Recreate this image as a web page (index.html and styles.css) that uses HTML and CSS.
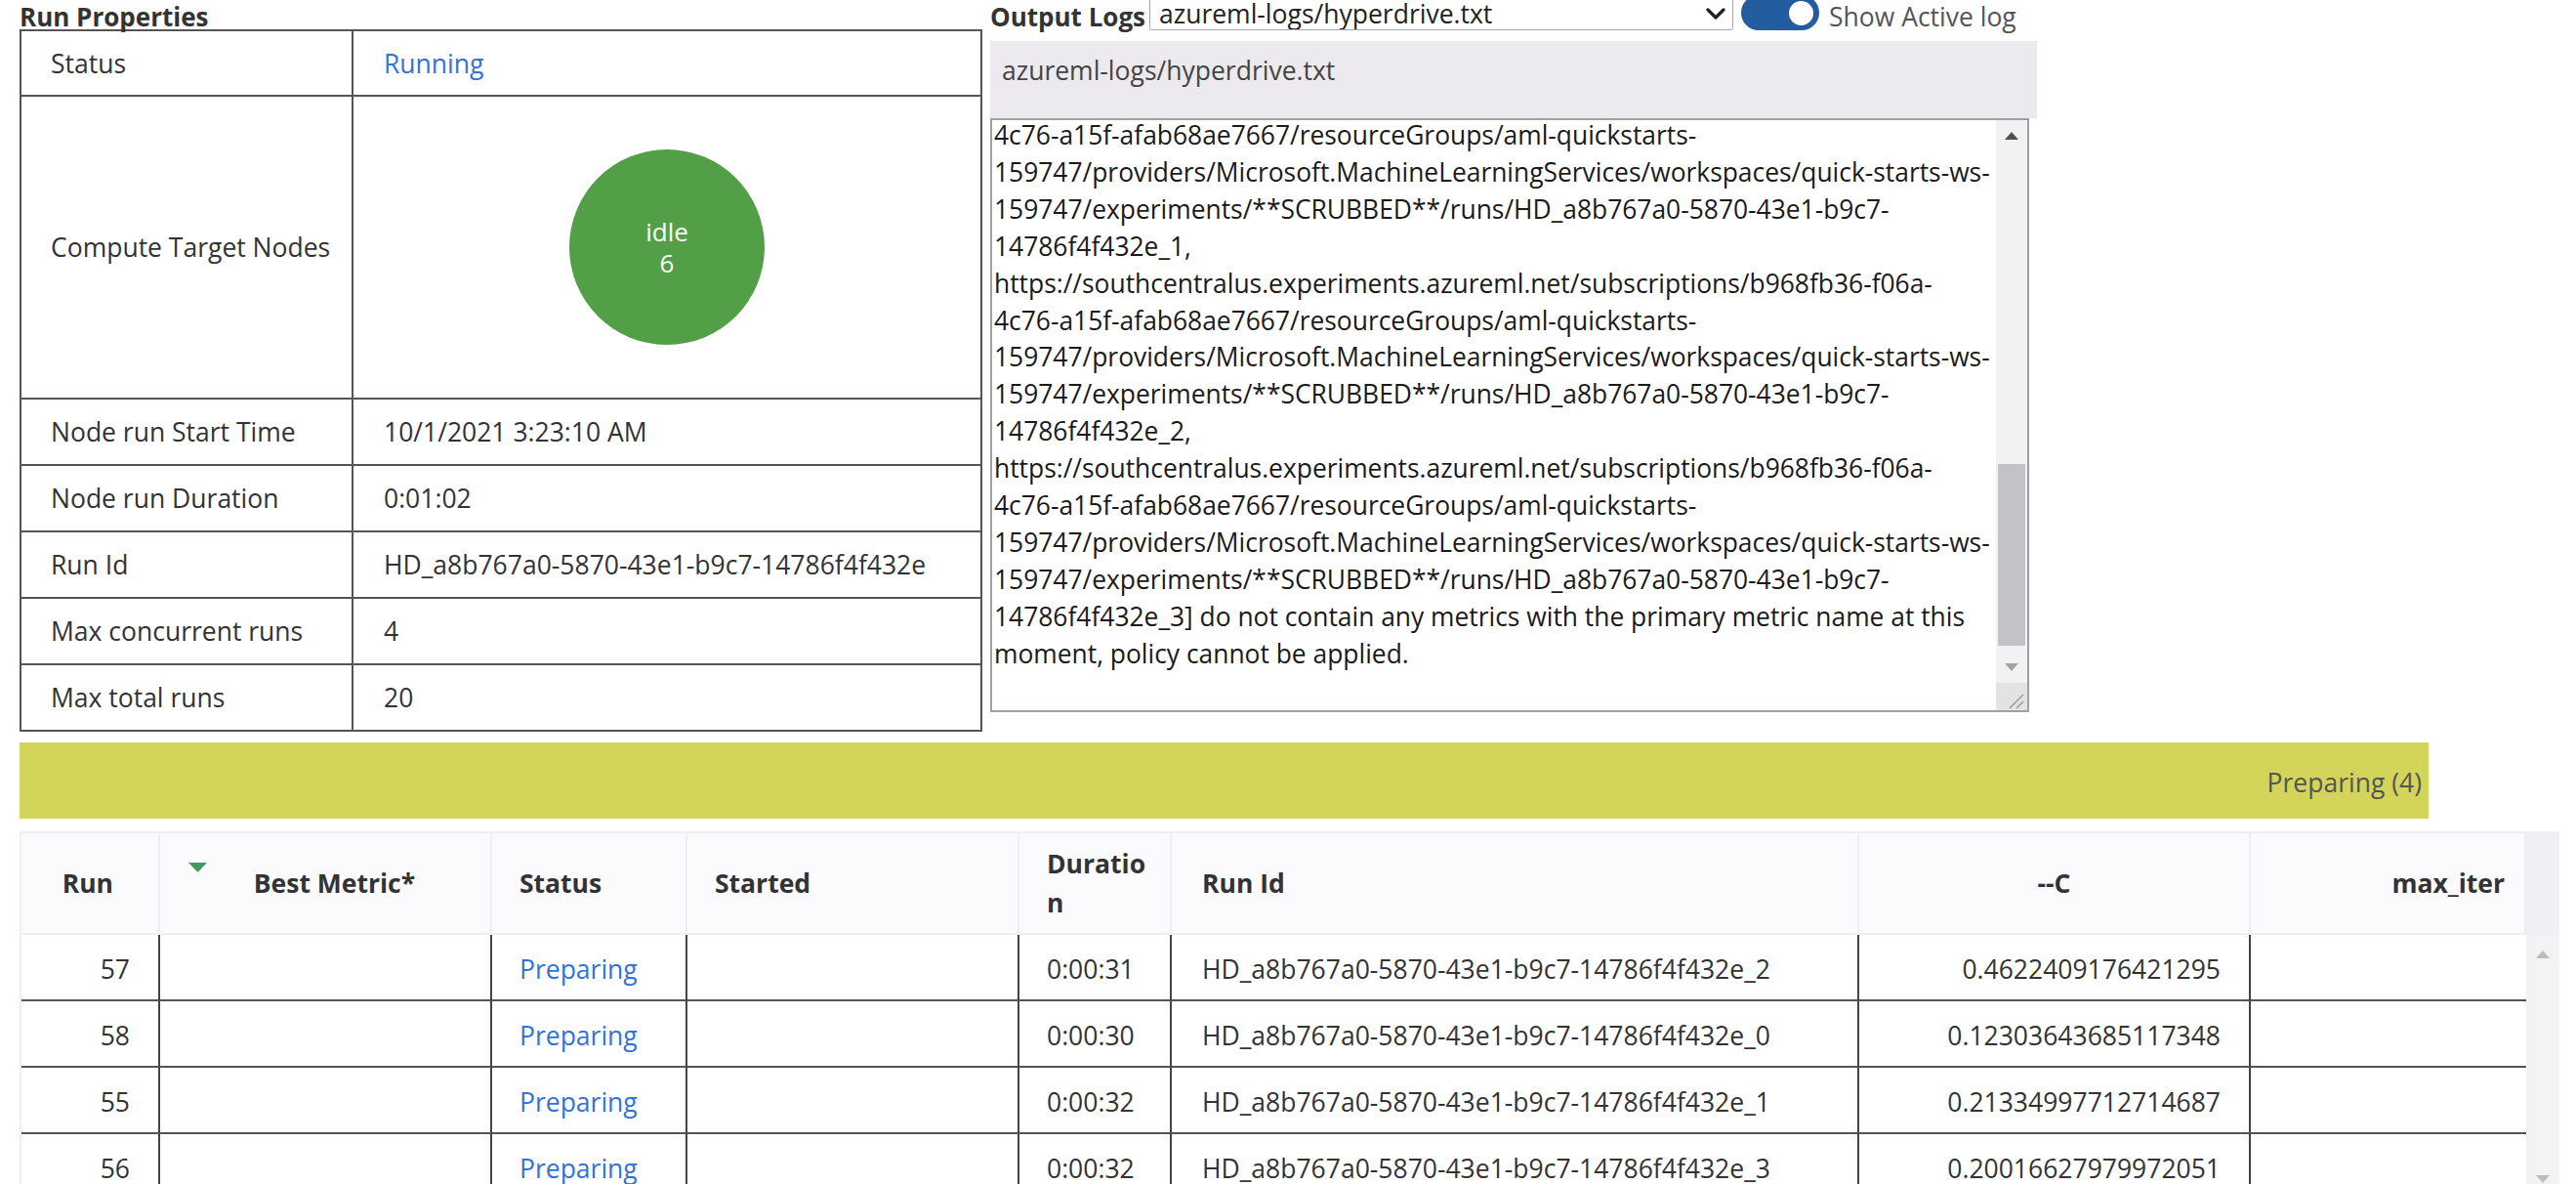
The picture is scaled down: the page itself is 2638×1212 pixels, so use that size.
FILE: index.html
```html
<!DOCTYPE html>
<html lang="en">
<head>
<meta charset="utf-8">
<title>Run Details</title>
<link rel="stylesheet" href="styles.css">
</head>
<body>
<div class="page">
  <div class="top">
    <section class="props">
      <h2 class="title">Run Properties</h2>
      <div class="ptable">
        <div class="pk r-s">Status</div>
        <div class="pv r-s"><a class="link">Running</a></div>
        <div class="pk r-c">Compute Target Nodes</div>
        <div class="pv r-c center"><div class="node"><span>idle</span><span>6</span></div></div>
        <div class="pk">Node run Start Time</div>
        <div class="pv">10/1/2021 3:23:10 AM</div>
        <div class="pk">Node run Duration</div>
        <div class="pv">0:01:02</div>
        <div class="pk">Run Id</div>
        <div class="pv">HD_a8b767a0-5870-43e1-b9c7-14786f4f432e</div>
        <div class="pk">Max concurrent runs</div>
        <div class="pv">4</div>
        <div class="pk">Max total runs</div>
        <div class="pv">20</div>
      </div>
    </section>
    <section class="logs">
      <div class="logbar">
        <span class="title logtitle">Output Logs</span>
        <div class="selwrap">
          <select class="sel"><option>azureml-logs/hyperdrive.txt</option></select>
          <svg class="chev" viewBox="0 0 20 12" aria-hidden="true"><path d="M2 2 L10 10 L18 2" fill="none" stroke="#222" stroke-width="3.2" stroke-linecap="round" stroke-linejoin="round"/></svg>
        </div>
        <span class="toggle"><span class="knob"></span></span>
        <span class="toglabel">Show Active log</span>
      </div>
      <div class="logname">azureml-logs/hyperdrive.txt</div>
      <div class="logbox">
        <div class="logtext">4c76-a15f-afab68ae7667/resourceGroups/aml-quickstarts-
159747/providers/Microsoft.MachineLearningServices/workspaces/quick-starts-ws-
159747/experiments/**SCRUBBED**/runs/HD_a8b767a0-5870-43e1-b9c7-
14786f4f432e_1,
https://southcentralus.experiments.azureml.net/subscriptions/b968fb36-f06a-
4c76-a15f-afab68ae7667/resourceGroups/aml-quickstarts-
159747/providers/Microsoft.MachineLearningServices/workspaces/quick-starts-ws-
159747/experiments/**SCRUBBED**/runs/HD_a8b767a0-5870-43e1-b9c7-
14786f4f432e_2,
https://southcentralus.experiments.azureml.net/subscriptions/b968fb36-f06a-
4c76-a15f-afab68ae7667/resourceGroups/aml-quickstarts-
159747/providers/Microsoft.MachineLearningServices/workspaces/quick-starts-ws-
159747/experiments/**SCRUBBED**/runs/HD_a8b767a0-5870-43e1-b9c7-
14786f4f432e_3] do not contain any metrics with the primary metric name at this
moment, policy cannot be applied.</div>
        <div class="vscroll">
          <div class="sb-btn"><svg viewBox="0 0 14 8" class="sb-arrow"><path d="M0 8 L7 0 L14 8 Z" fill="#505050"/></svg></div>
          <div class="sb-track"><div class="sb-thumb"></div></div>
          <div class="sb-btn"><svg viewBox="0 0 14 8" class="sb-arrow"><path d="M0 0 L14 0 L7 8 Z" fill="#a3a3a3"/></svg></div>
          <div class="sb-corner"><svg viewBox="0 0 28 28" class="grip"><path d="M26 12 L12 26 M26 19 L19 26" stroke="#9a9a9a" stroke-width="1.5"/></svg></div>
        </div>
      </div>
    </section>
  </div>

  <div class="statusbar">Preparing (4)</div>

  <div class="grid">
    <div class="ghead">
      <div class="gh h-run">Run</div>
      <div class="gh h-best"><svg class="sort" viewBox="0 0 19 10" aria-hidden="true"><path d="M0 0 L19 0 L9.5 10 Z" fill="#3f9b63"/></svg>Best Metric*</div>
      <div class="gh h-left">Status</div>
      <div class="gh h-left">Started</div>
      <div class="gh h-left">Duratio<br>n</div>
      <div class="gh h-id">Run Id</div>
      <div class="gh h-c">--C</div>
      <div class="gh h-iter">max_iter</div>
      <div class="gh h-gutter"></div>
    </div>
    <div class="gbody">
      <div class="grows">
        <div class="gd d-num">57</div><div class="gd"></div><div class="gd d-left"><a class="link">Preparing</a></div><div class="gd"></div><div class="gd d-left">0:00:31</div><div class="gd d-id">HD_a8b767a0-5870-43e1-b9c7-14786f4f432e_2</div><div class="gd d-num">0.4622409176421295</div><div class="gd last"></div>
        <div class="gd d-num">58</div><div class="gd"></div><div class="gd d-left"><a class="link">Preparing</a></div><div class="gd"></div><div class="gd d-left">0:00:30</div><div class="gd d-id">HD_a8b767a0-5870-43e1-b9c7-14786f4f432e_0</div><div class="gd d-num">0.12303643685117348</div><div class="gd last"></div>
        <div class="gd d-num">55</div><div class="gd"></div><div class="gd d-left"><a class="link">Preparing</a></div><div class="gd"></div><div class="gd d-left">0:00:32</div><div class="gd d-id">HD_a8b767a0-5870-43e1-b9c7-14786f4f432e_1</div><div class="gd d-num">0.21334997712714687</div><div class="gd last"></div>
        <div class="gd d-num">56</div><div class="gd"></div><div class="gd d-left"><a class="link">Preparing</a></div><div class="gd"></div><div class="gd d-left">0:00:32</div><div class="gd d-id">HD_a8b767a0-5870-43e1-b9c7-14786f4f432e_3</div><div class="gd d-num">0.20016627979972051</div><div class="gd last"></div>
      </div>
      <div class="gscroll">
        <svg viewBox="0 0 14 8" class="gs-up"><path d="M0 8 L7 0 L14 8 Z" fill="#bdbdbd"/></svg>
        <svg viewBox="0 0 14 8" class="gs-down"><path d="M0 0 L14 0 L7 8 Z" fill="#bdbdbd"/></svg>
      </div>
    </div>
  </div>
</div>
</body>
</html>
```

FILE: styles.css
```css
* { box-sizing: border-box; }
html, body { margin: 0; padding: 0; background: #fff; }
body {
  font-family: "Open Sans", "Noto Sans", sans-serif;
  font-size: 26.5px;
  color: #333;
}
.page {
  width: 2638px;
  height: 1212px;
  overflow: hidden;
  padding-left: 20px;
}
.link { color: #3272d9; text-decoration: none; }

/* ---------- top ---------- */
.top { display: flex; align-items: flex-start; }
.props { width: 986px; flex: none; }
.title {
  margin: 0;
  height: 30px;
  font-size: 26px;
  line-height: 34px;
  font-weight: 700;
  color: #333;
  white-space: nowrap;
}
.ptable {
  display: grid;
  grid-template-columns: 340px 644px;
  border-top: 2px solid #555;
  border-left: 2px solid #555;
}
.pk, .pv {
  height: 68px;
  border-right: 2px solid #555;
  border-bottom: 2px solid #555;
  display: flex;
  align-items: center;
}
.pk { padding-left: 30px; }
.pv { padding-left: 31px; }
.r-s { height: 67px; }
.r-c { height: 310px; }
.pv.center { justify-content: center; padding-left: 0; }
.node {
  width: 200px;
  height: 200px;
  border-radius: 50%;
  background: #539f47;
  color: #fff;
  display: flex;
  flex-direction: column;
  align-items: center;
  justify-content: center;
  font-size: 26px;
  line-height: 32px;
}

.logs { width: 1072px; margin-left: 8px; flex: none; }
.logbar {
  display: flex;
  align-items: flex-start;
  height: 31px;
}
.logbar .logtitle { margin: 0; width: 163px; flex: none; }
.selwrap { position: relative; width: 598px; height: 36px; margin-top: -5px; flex: none; }
.sel {
  appearance: none;
  -webkit-appearance: none;
  width: 100%;
  height: 100%;
  border: 1px solid #a8a8a8;
  border-radius: 2px;
  background: #fff;
  font-family: inherit;
  font-size: 26.5px;
  color: #222;
  padding: 0 0 0 9px;
  margin: 0;
}
.chev { position: absolute; right: 8px; top: 13px; width: 20px; height: 12px; pointer-events: none; }
.toggle {
  width: 80px;
  height: 36px;
  margin-top: -5px;
  border-radius: 18px;
  background: #245d9f;
  margin-left: 8px;
  display: flex;
  align-items: center;
  justify-content: flex-end;
  padding-right: 6px;
  flex: none;
}
.knob { width: 25px; height: 25px; border-radius: 50%; background: #fff; }
.toglabel { margin-left: 10px; color: #555; font-size: 26.5px; line-height: 34px; white-space: nowrap; }

.logname {
  margin-top: 11px;
  height: 79px;
  background: #eceaee;
  padding: 11px 0 0 12px;
  line-height: 38px;
  color: #444;
}
.logbox {
  width: 1064px;
  height: 608px;
  border: 2px solid #a0a0a0;
  display: flex;
  overflow: hidden;
}
.logtext {
  flex: 1;
  margin-top: -3px;
  padding-left: 2px;
  font-size: 26.4px;
  line-height: 37.9px;
  color: #1a1a1a;
  white-space: pre;
  overflow: hidden;
}
.vscroll {
  width: 32px;
  flex: none;
  display: flex;
  flex-direction: column;
  background: #f2f1f4;
}
.sb-btn { height: 32px; display: flex; align-items: center; justify-content: center; }
.sb-arrow { width: 14px; height: 8px; }
.sb-track { flex: 1; padding: 0 2px; }
.sb-thumb { margin-top: 320px; height: 186px; background: #c3c2c6; }
.sb-corner { height: 28px; background: #e3e2e5; position: relative; }
.grip { width: 28px; height: 28px; display: block; margin-left: 2px; }

/* ---------- status bar ---------- */
.statusbar {
  margin-top: 11px;
  width: 2467px;
  height: 78px;
  background: #d2d55a;
  display: flex;
  align-items: center;
  justify-content: flex-end;
  padding: 4px 7px 0 0;
  color: #555;
}

/* ---------- runs grid ---------- */
.grid {
  margin-top: 13px;
  width: 2601px;
  border-top: 2px solid #efeef2;
  border-left: 2px solid #efeef2;
}
.ghead {
  display: grid;
  grid-template-columns: 142px 340px 200px 340px 156px 704px 401px 282px 34px;
  background: #fbfafd;
}
.gh {
  position: relative;
  height: 104px;
  border-right: 2px solid #efeef2;
  border-bottom: 2px solid #efeef2;
  display: flex;
  align-items: center;
  font-weight: 700;
  line-height: 40px;
  color: #333;
}
.h-run { justify-content: flex-end; padding-right: 46px; }
.h-best { justify-content: center; padding-left: 19px; }
.h-left { padding-left: 28px; }
.h-id { padding-left: 31px; }
.h-c { justify-content: center; }
.h-iter { justify-content: flex-end; padding-right: 20px; }
.h-gutter { background: #f0eff3; border-right: 0; }
.sort { position: absolute; left: 29px; top: 30px; width: 19px; height: 10px; }

.gbody { display: flex; }
.grows {
  display: grid;
  grid-template-columns: 142px 340px 200px 340px 156px 704px 401px 282px;
}
.gd {
  height: 68px;
  border-right: 2px solid #444;
  border-bottom: 2px solid #555;
  display: flex;
  align-items: center;
  padding-top: 3px;
  white-space: nowrap;
}
.gd.last { border-right: 0; }
.d-num { justify-content: flex-end; padding-right: 29px; }
.d-left { padding-left: 28px; }
.d-id { padding-left: 31px; }
.gscroll { width: 34px; flex: none; background: #f3f2f5; position: relative; }
.gs-up { position: absolute; left: 10px; top: 16px; width: 14px; height: 8px; }
.gs-down { position: absolute; left: 10px; bottom: 18px; width: 14px; height: 8px; }
```
